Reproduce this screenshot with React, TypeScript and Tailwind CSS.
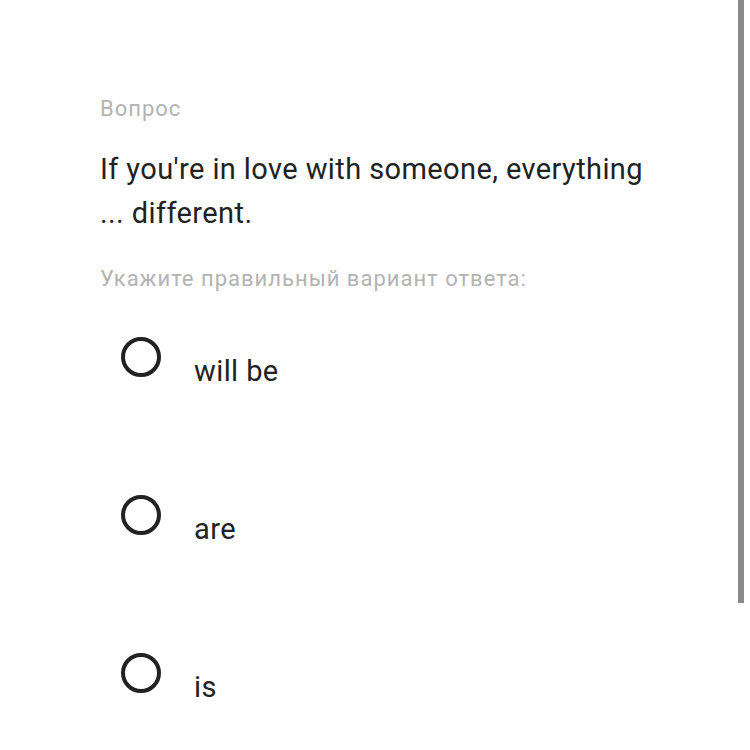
const options = ["will be", "are", "is"];

const App = () => {
    return (
        <div className="relative w-[750px] h-[750px] overflow-hidden bg-white font-['Roboto',sans-serif]">
            <div className="flex flex-col pl-[100px] pt-[94px] w-[660px]">
                <div className="text-[22px] leading-[30px] tracking-[1px] text-[#b3b3b3]">Вопрос</div>

                <div className="mt-[23px] text-[29px] leading-[44px] tracking-[0.4px] text-[#222222]">
                    If you're in love with someone, everything ... different.
                </div>

                <div className="mt-[29px] text-[22px] leading-[30px] tracking-[1px] text-[#b3b3b3]">
                    Укажите правильный вариант ответа:
                </div>

                <div className="flex flex-col mt-[43px]">
                    {options.map((o, i) => (
                        <div key={i} className="flex flex-row items-start h-[158px]">
                            <div className="ml-[21px] w-[40px] h-[40px] rounded-full border-[4px] border-[#222222]" />
                            <span className="ml-[33px] mt-[14px] text-[29px] leading-[40px] tracking-[0.4px] text-[#222222]">{o}</span>
                        </div>
                    ))}
                </div>
            </div>

            <div className="absolute top-0 right-[6px] w-[6px] h-[603px] bg-[#8a8a8a]" />
        </div>
    );
};

export default App;
